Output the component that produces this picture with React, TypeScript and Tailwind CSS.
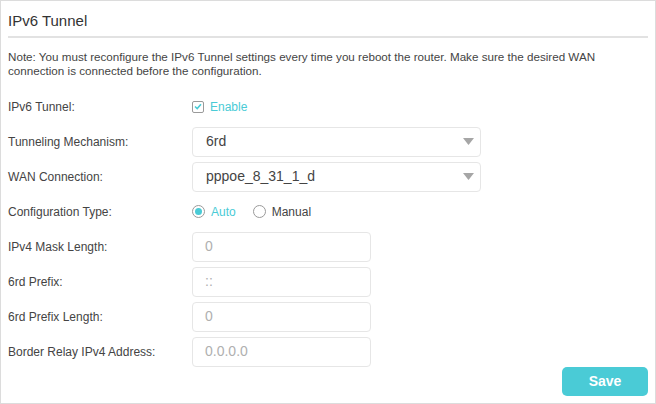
import React from "react";

const teal = "text-[#4acbd6]";

function Row({ label, children }: { label: string; children: React.ReactNode }) {
  return (
    <div className="flex h-[35px] items-center">
      <div className="w-[184px] shrink-0 text-[12px] text-[#444]">{label}</div>
      <div className="flex items-center">{children}</div>
    </div>
  );
}

function SelectBox({ value }: { value: string }) {
  return (
    <div className="flex h-[30px] w-[289px] items-center justify-between rounded-[4px] border border-[#e6e6e6] bg-white pl-[13px] pr-[5px]">
      <span className="text-[14px] text-[#444]">{value}</span>
      <svg width="11" height="7" viewBox="0 0 11 7" className="mr-[1px]">
        <path d="M0 0 L11 0 L5.5 7 Z" fill="#a6a6a6" />
      </svg>
    </div>
  );
}

function TextBox({ value }: { value: string }) {
  return (
    <div className="flex h-[30px] w-[179px] items-center rounded-[4px] border border-[#e6e6e6] bg-white pl-[12px]">
      <span className="text-[14px] text-[#b0b0b0]">{value}</span>
    </div>
  );
}

function Radio({ checked, label }: { checked?: boolean; label: string }) {
  return (
    <div className="flex items-center">
      <span className="flex h-[13px] w-[13px] items-center justify-center rounded-full border border-[#9a9a9a] bg-white">
        {checked && <span className="h-[7px] w-[7px] rounded-full bg-[#4acbd6]" />}
      </span>
      <span className={`ml-[6px] text-[12px] ${checked ? teal : "text-[#444]"}`}>{label}</span>
    </div>
  );
}

export default function App() {
  return (
    <div
      className="h-[404px] w-[656px] overflow-hidden border border-[#dcdcdc] bg-white px-[7px] text-[#333]"
      style={{ fontFamily: '"Liberation Sans", Arial, sans-serif' }}
    >
      <div className="pt-[11px] text-[15px] leading-[18px] text-[#333]">IPv6 Tunnel</div>
      <div className="mt-[6px] h-[2px] bg-[#e2e2e2]" />
      <p className="mt-[12px] text-[11.65px] leading-[14px] text-[#444]">
        Note: You must reconfigure the IPv6 Tunnel settings every time you reboot the router. Make sure the desired WAN
        connection is connected before the configuration.
      </p>

      <div className="mt-[11px]">
        <Row label="IPv6 Tunnel:">
          <span className="flex h-[12px] w-[12px] items-center justify-center rounded-[2px] border border-[#9a9a9a] bg-white">
            <svg width="8" height="7" viewBox="0 0 8 7">
              <path d="M1 3.5 L3.2 5.5 L7 1.2" stroke="#4acbd6" strokeWidth="1.6" fill="none" />
            </svg>
          </span>
          <span className={`ml-[6px] text-[12px] ${teal}`}>Enable</span>
        </Row>
        <Row label="Tunneling Mechanism:">
          <SelectBox value="6rd" />
        </Row>
        <Row label="WAN Connection:">
          <SelectBox value="pppoe_8_31_1_d" />
        </Row>
        <Row label="Configuration Type:">
          <Radio checked label="Auto" />
          <div className="ml-[17px]">
            <Radio label="Manual" />
          </div>
        </Row>
        <Row label="IPv4 Mask Length:">
          <TextBox value="0" />
        </Row>
        <Row label="6rd Prefix:">
          <TextBox value="::" />
        </Row>
        <Row label="6rd Prefix Length:">
          <TextBox value="0" />
        </Row>
        <Row label="Border Relay IPv4 Address:">
          <TextBox value="0.0.0.0" />
        </Row>
      </div>

      <div className="mt-[-2px] flex justify-end">
        <button className="h-[29px] w-[86px] rounded-[5px] bg-[#4acbd6] text-[14px] font-bold text-white">
          Save
        </button>
      </div>
    </div>
  );
}
